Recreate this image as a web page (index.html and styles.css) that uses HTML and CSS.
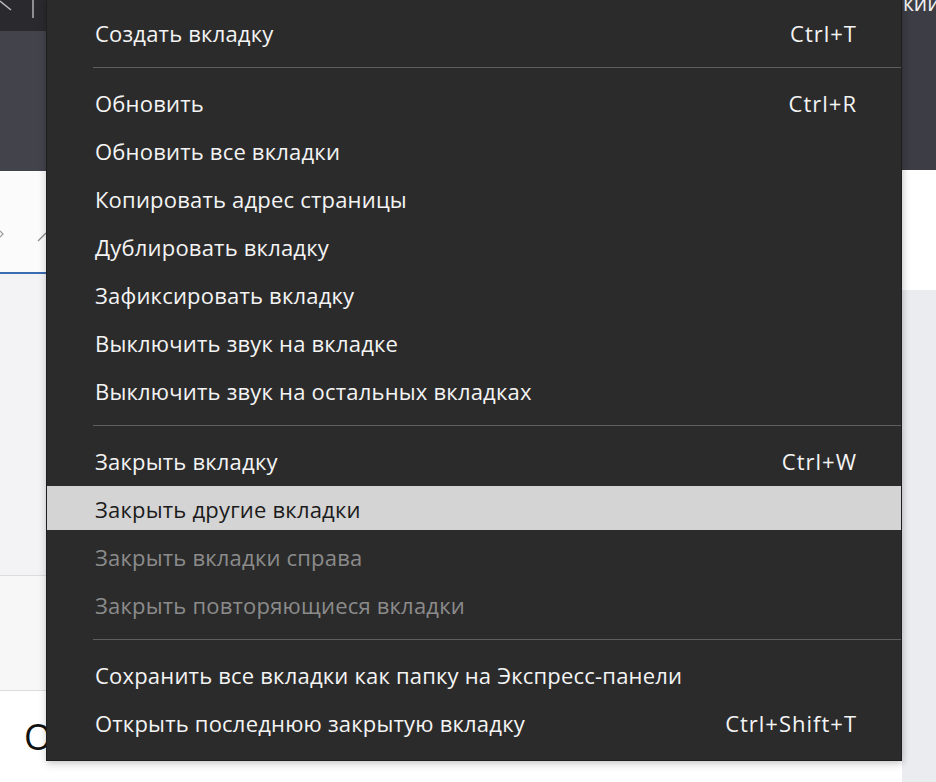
FILE: index.html
```html
<!DOCTYPE html>
<html lang="ru">
<head>
<meta charset="utf-8">
<title>Контекстное меню вкладки</title>
<link rel="stylesheet" href="styles.css">
</head>
<body>
<div class="backdrop">
  <div class="col col-left">
    <div class="l-tabbar">
      <svg class="l-tabbar-icons" width="46" height="31" viewBox="0 0 46 31"><path d="M0 1 L11 10" stroke="#b9b9bd" stroke-width="1.6" fill="none"/><path d="M33 0 V18" stroke="#a9a9ad" stroke-width="1.6"/></svg>
    </div>
    <div class="l-toolbar"></div>
    <div class="l-address">
      <svg width="46" height="100" viewBox="0 0 46 100"><path d="M0 60 L3 63 L0 66" stroke="#9a9a9a" stroke-width="1.2" fill="none"/><path d="M38 70 L46 62" stroke="#8a8a8a" stroke-width="1.3" fill="none"/></svg>
    </div>
    <div class="l-focus"></div>
    <div class="l-panel-a"></div>
    <div class="l-panel-b"></div>
    <div class="l-bottom"><span class="big-letter">О</span></div>
  </div>
  <div class="col col-right">
    <div class="r-top"><span class="r-text">кии</span></div>
    <div class="r-white"></div>
    <div class="r-gray"></div>
  </div>
</div>

<div class="menu">
  <div class="item"><span>Создать вкладку</span><span class="key">Ctrl+T</span></div>
  <div class="sep"></div>
  <div class="item"><span>Обновить</span><span class="key">Ctrl+R</span></div>
  <div class="item"><span>Обновить все вкладки</span></div>
  <div class="item"><span>Копировать адрес страницы</span></div>
  <div class="item"><span>Дублировать вкладку</span></div>
  <div class="item"><span>Зафиксировать вкладку</span></div>
  <div class="item"><span>Выключить звук на вкладке</span></div>
  <div class="item"><span>Выключить звук на остальных вкладках</span></div>
  <div class="sep"></div>
  <div class="item"><span>Закрыть вкладку</span><span class="key">Ctrl+W</span></div>
  <div class="item active"><span>Закрыть другие вкладки</span></div>
  <div class="item disabled"><span>Закрыть вкладки справа</span></div>
  <div class="item disabled"><span>Закрыть повторяющиеся вкладки</span></div>
  <div class="sep"></div>
  <div class="item"><span>Сохранить все вкладки как папку на Экспресс-панели</span></div>
  <div class="item"><span>Открыть последнюю закрытую вкладку</span><span class="key">Ctrl+Shift+T</span></div>
</div>
</body>
</html>
```

FILE: styles.css
```css
html, body {
  margin: 0;
  padding: 0;
  width: 936px;
  height: 782px;
  overflow: hidden;
  background: #ffffff;
  font-family: "Open Sans", "Noto Sans", sans-serif;
}

.backdrop {
  display: flex;
  justify-content: space-between;
  height: 782px;
}

.col {
  display: flex;
  flex-direction: column;
}

.col-left {
  width: 46px;
}

.col-right {
  width: 34px;
}

.l-tabbar {
  height: 31px;
  background: #2a2a2e;
}

.l-tabbar-icons {
  display: block;
}

.l-toolbar {
  height: 140px;
  background: #42434b;
}

.l-address {
  height: 101px;
  background: #fbfbfc;
}

.l-address svg {
  display: block;
}

.l-focus {
  height: 2px;
  background: #3b6bb0;
}

.l-panel-a {
  height: 301px;
  background: #f3f3f5;
  border-bottom: 1px solid #dcdcde;
}

.l-panel-b {
  height: 114px;
  background: #f7f7f8;
  border-bottom: 1px solid #dcdcde;
}

.l-bottom {
  flex: 1;
  background: #ffffff;
  display: flex;
  align-items: flex-start;
  padding-top: 28px;
  padding-left: 24px;
}

.big-letter {
  font-family: "Open Sans", sans-serif;
  font-size: 36px;
  line-height: 36px;
  color: #111111;
}

.r-top {
  height: 170px;
  background: #3c3d45;
  overflow: hidden;
}

.r-text {
  display: block;
  margin-top: -9px;
  padding-left: 1px;
  font-size: 21px;
  line-height: 24px;
  color: #f2f2f2;
  white-space: nowrap;
}

.r-white {
  height: 120px;
  background: #ffffff;
}

.r-gray {
  flex: 1;
  background: #ebecf0;
}

.menu {
  position: absolute;
  left: 46px;
  top: 0;
  width: 856px;
  box-sizing: border-box;
  padding: 10px 0 12px;
  background: #2b2b2b;
  border-left: 1px solid #1e1e1e;
  border-right: 1px solid #1e1e1e;
  border-bottom: 1px solid #1e1e1e;
  box-shadow: 0 3px 8px rgba(0, 0, 0, 0.18), 2px 0 6px rgba(0, 0, 0, 0.08);
}

.item {
  height: 48px;
  box-sizing: border-box;
  padding: 0 45px 2px 48px;
  display: flex;
  align-items: center;
  justify-content: space-between;
  font-size: 22px;
  letter-spacing: 0.2px;
  color: #f4f4f4;
  white-space: nowrap;
}

.item.active {
  background: linear-gradient(#d4d4d4, #d4d4d4) top left / 100% 44px no-repeat;
  color: #1b1b1b;
}

.item.disabled {
  color: #8b8b8b;
}

.key {
  color: #f4f4f4;
  letter-spacing: 1px;
  margin-right: -1px;
}

.sep {
  height: 1px;
  margin: 9px 0 12px 46px;
  background: #5e5e5e;
}
```
